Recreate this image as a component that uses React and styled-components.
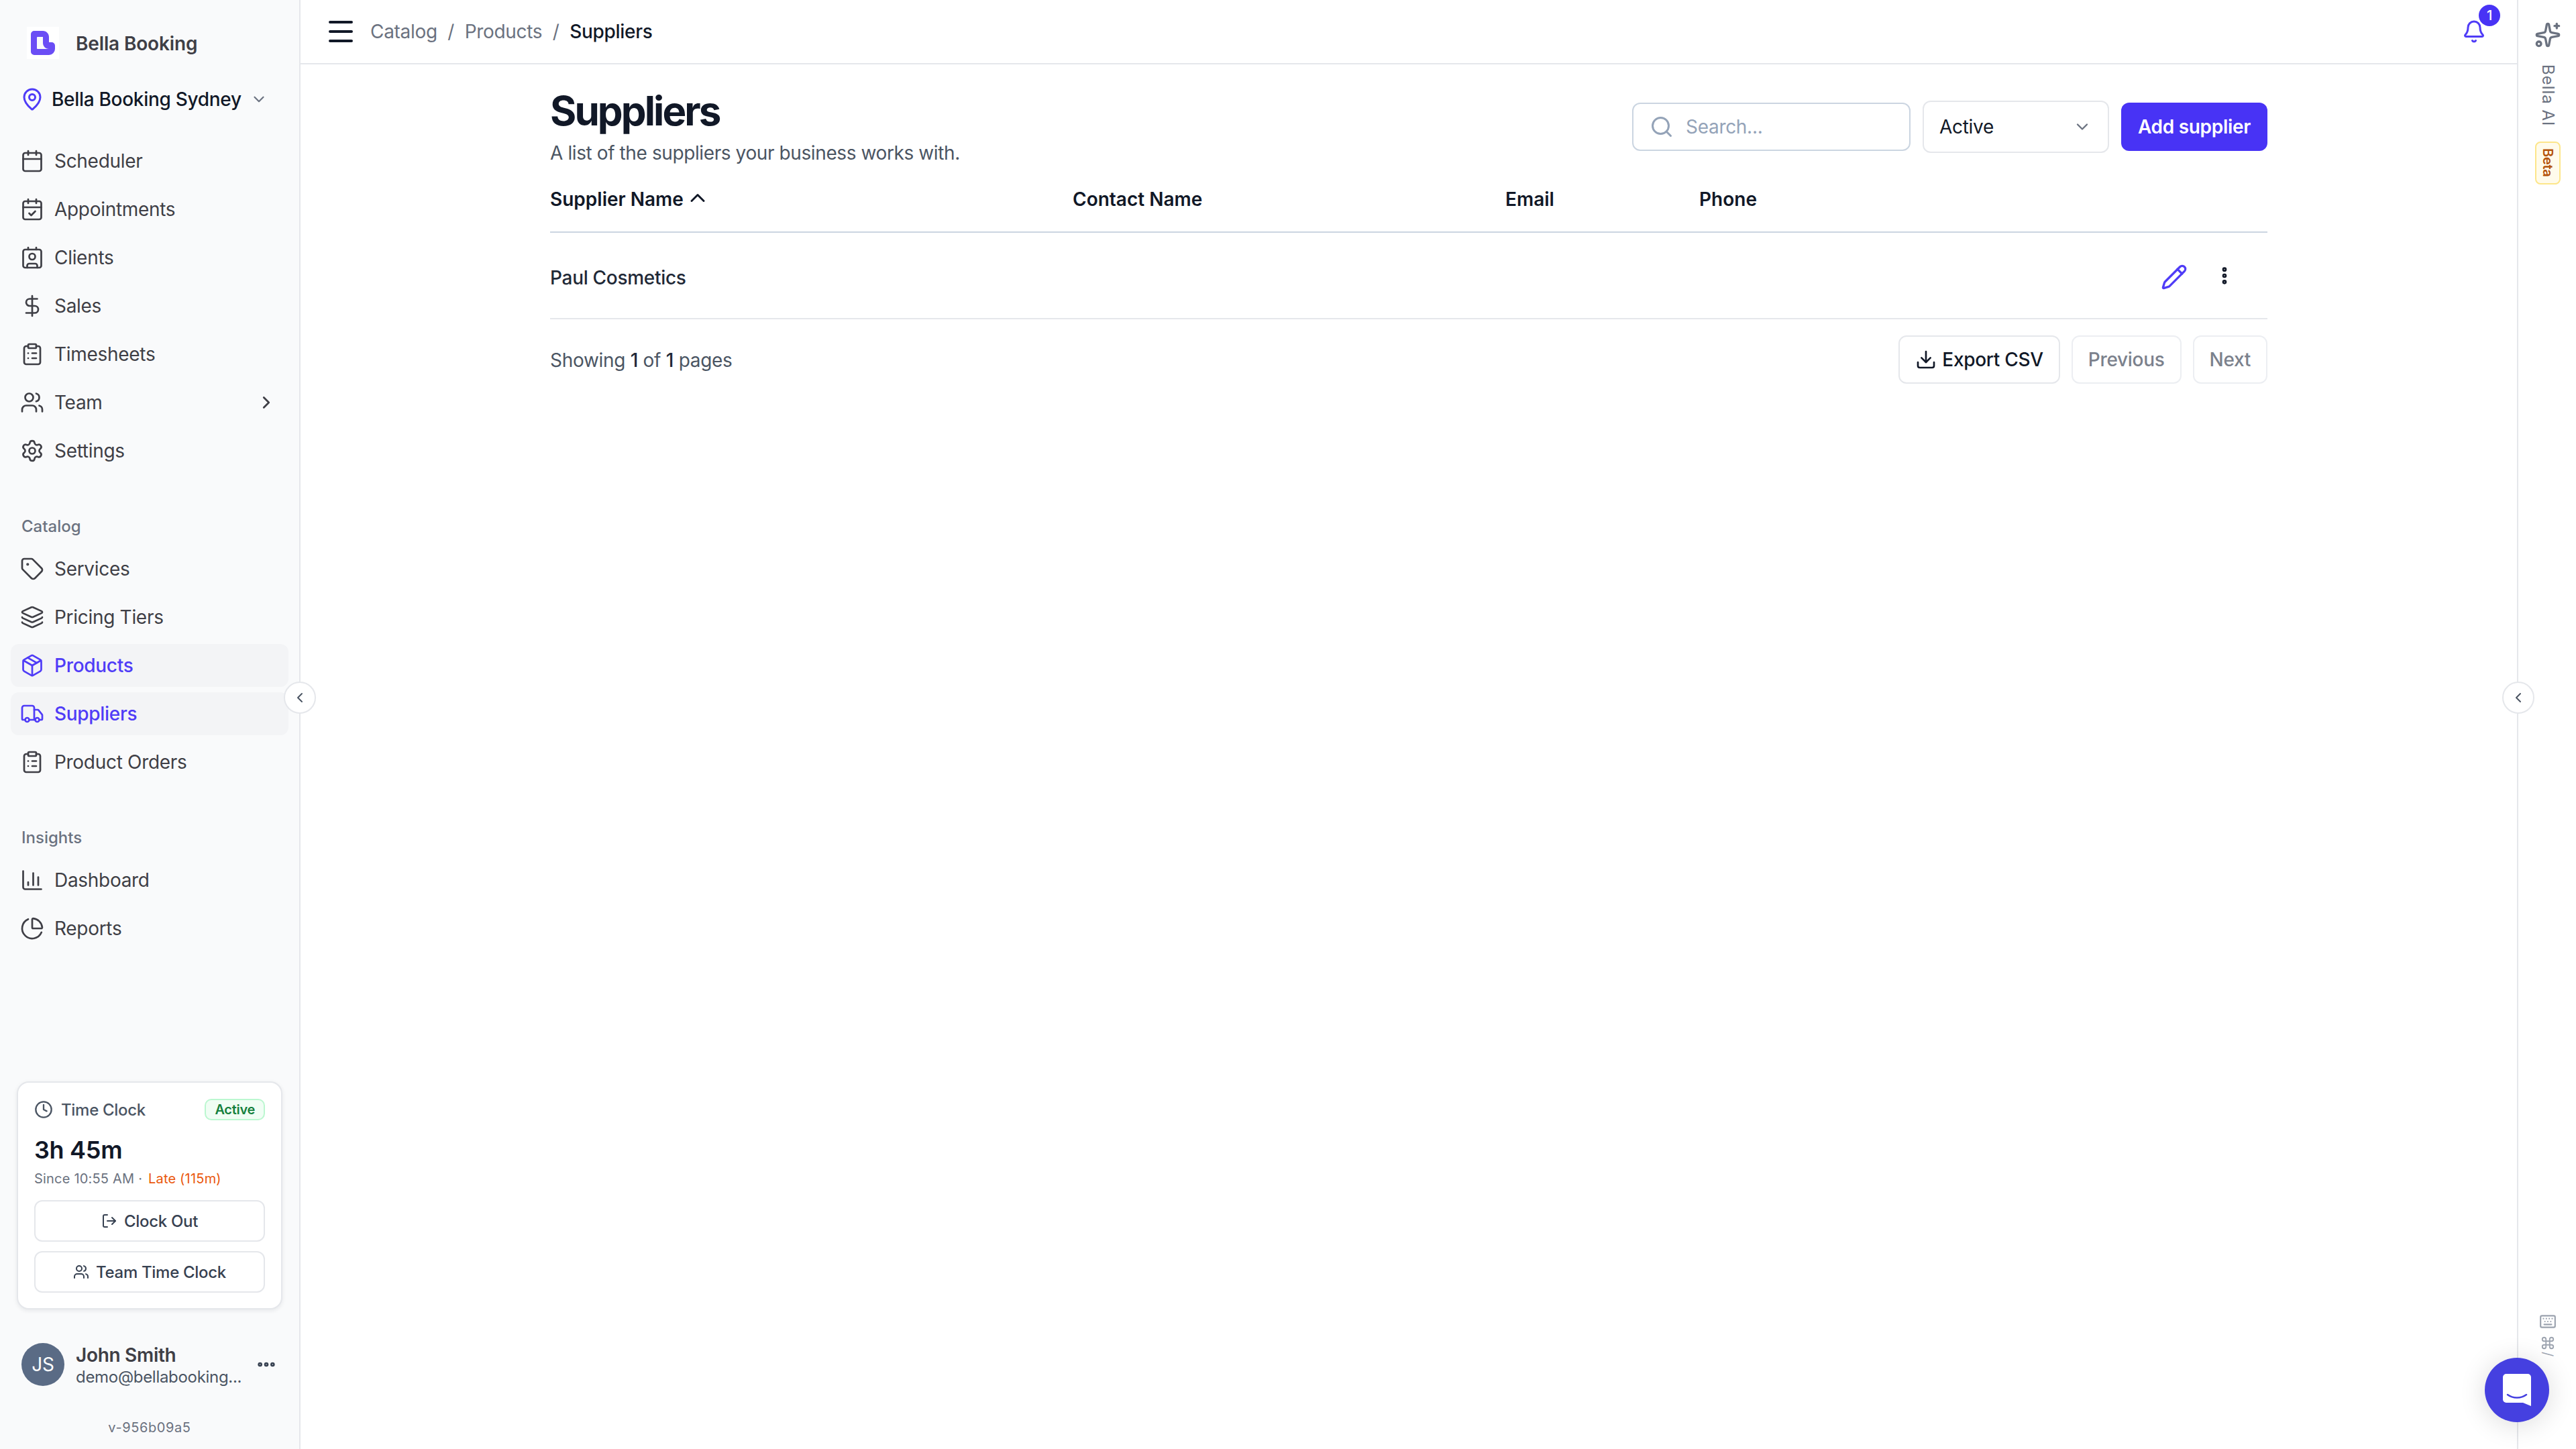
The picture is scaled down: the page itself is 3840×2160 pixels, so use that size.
import React from 'react';
import styled, { createGlobalStyle } from 'styled-components';
import {
  Bell, Calendar, CalendarCheck, ChartColumn, ChartPie, ChevronDown, ChevronLeft, ChevronRight, ChevronUp,
  ClipboardList, Clock, Command, Contact, DollarSign, Download, Ellipsis, EllipsisVertical, Keyboard, Layers,
  LogOut, MapPin, Package, Pencil, Search, Settings, Sparkles, Tag, Truck, Users,
} from 'lucide-react';

const GlobalStyle = createGlobalStyle`
  html, body { margin: 0; padding: 0; background: #fff; }
  body { font-family: Inter, "Noto Sans", sans-serif; color: #111827; letter-spacing: -0.3px; }
  * { box-sizing: border-box; }
`;

const Page = styled.div`
  position: relative;
  display: flex;
  width: 3840px;
  height: 2160px;
  overflow: hidden;
  background: #fff;
`;

/* sidebar */
const Sidebar = styled.aside`
  width: 448px;
  flex: none;
  display: flex;
  flex-direction: column;
  background: #f9fafb;
  border-right: 2px solid #e5e7eb;
  padding-bottom: 18px;
`;

const Brand = styled.div`
  display: flex;
  align-items: center;
  gap: 25px;
  margin: 40px 0 0 40px;
  height: 48px;
  font-size: 28px;
  font-weight: 600;
  letter-spacing: -0.15px;
  color: #3f3f46;
  span { position: relative; top: 1px; }
`;

const LogoBox = styled.div`
  width: 48px;
  height: 48px;
  background: #fff;
  display: flex;
  align-items: center;
  justify-content: center;
`;

const Location = styled.div`
  display: flex;
  align-items: center;
  height: 48px;
  margin: 36px 0 36px 30px;
  font-size: 28px;
  font-weight: 500;
  color: #111827;
  svg:first-child { color: #4f3cf7; margin-right: 11px; }
  svg:last-child { color: #6b7280; margin-left: 13px; }
`;

const NavList = styled.nav`
  display: flex;
  flex-direction: column;
  gap: 8px;
  padding: 0 16px;
`;

const NavItem = styled.div`
  display: flex;
  align-items: center;
  gap: 15px;
  height: 64px;
  padding: 0 14px;
  border-radius: 12px;
  font-size: 28px;
  color: ${(p) => (p.$active ? '#4f3cf7' : '#3f3f46')};
  font-weight: ${(p) => (p.$active ? 500 : 400)};
  background: ${(p) => (p.$active ? '#f3f4f6' : 'transparent')};
  svg { flex: none; }
  svg:nth-child(3) { margin-left: auto; margin-right: 4px; }
`;

const SectionLabel = styled.div`
  margin: 64px 0 16px 32px;
  height: 32px;
  line-height: 34px;
  font-size: 24px;
  font-weight: 500;
  color: #6b7280;
  letter-spacing: 0;
`;

const ClockCard = styled.div`
  margin: auto 0 0 25px;
  width: 396px;
  padding: 24px 24px 23px;
  background: #fff;
  border: 2px solid #e5e7eb;
  border-radius: 18px;
  box-shadow: 0 2px 6px rgba(17, 24, 39, 0.08);
`;

const ClockHead = styled.div`
  display: flex;
  align-items: center;
  height: 32px;
  font-size: 24px;
  font-weight: 500;
  color: #4b5563;
  svg { margin-right: 12px; }
`;

const ActiveBadge = styled.span`
  margin-left: auto;
  height: 32px;
  padding: 0 13px;
  line-height: 28px;
  border: 2px solid #bbf7d0;
  border-radius: 10px;
  background: #f0fdf4;
  color: #15803d;
  font-size: 20px;
  font-weight: 600;
`;

const Elapsed = styled.div`
  margin-top: 22px;
  line-height: 44px;
  font-size: 36px;
  font-weight: 600;
  color: #111827;
`;

const Since = styled.div`
  margin: 7px 0 18px;
  line-height: 28px;
  font-size: 20px;
  letter-spacing: 0.2px;
  color: #6b7280;
  span { color: #ea580c; margin-left: 3px; }
`;

const ClockButton = styled.div`
  display: flex;
  align-items: center;
  justify-content: center;
  gap: 10px;
  height: 62px;
  margin-top: ${(p) => (p.$second ? '14px' : 0)};
  border: 2px solid #e5e7eb;
  border-radius: 12px;
  font-size: 24px;
  font-weight: 500;
  color: #374151;
`;

const UserRow = styled.div`
  display: flex;
  align-items: center;
  height: 64px;
  margin: 50px 0 0 32px;
`;

const Avatar = styled.div`
  width: 64px;
  height: 64px;
  border-radius: 50%;
  background: #5a6b85;
  color: #fff;
  display: flex;
  align-items: center;
  justify-content: center;
  font-size: 28px;
  margin-right: 17px;
`;

const UserText = styled.div`
  width: 268px;
  display: flex;
  flex-direction: column;
  padding-top: 3px;
`;

const UserName = styled.div`
  font-size: 28px;
  line-height: 34px;
  font-weight: 600;
  color: #3f3f46;
`;

const UserMail = styled.div`
  font-size: 24px;
  line-height: 32px;
  color: #4b5563;
  white-space: nowrap;
`;

const Version = styled.div`
  margin-top: 48px;
  line-height: 28px;
  text-align: center;
  font-size: 20px;
  letter-spacing: 0.6px;
  color: #6b7280;
`;

/* main */
const Main = styled.main`
  flex: 1;
  min-width: 0;
  display: flex;
  flex-direction: column;
`;

const TopBar = styled.header`
  height: 96px;
  flex: none;
  display: flex;
  align-items: center;
  padding: 0 32px 0 42px;
  border-bottom: 2px solid #e5e7eb;
`;

const Crumbs = styled.div`
  display: flex;
  align-items: center;
  gap: 15.5px;
  margin-left: 26px;
  font-size: 28px;
  color: #6b7280;
  b { font-weight: 500; color: #111827; }
`;

const BellWrap = styled.div`
  position: relative;
  margin-left: auto;
  width: 32px;
  height: 36px;
  color: #4f3cf7;
  margin-right: 18px;
`;

const BellCount = styled.span`
  position: absolute;
  top: -22px;
  left: 25px;
  width: 32px;
  height: 32px;
  border-radius: 50%;
  background: #4833f5;
  color: #fff;
  font-size: 20px;
  font-weight: 500;
  display: flex;
  align-items: center;
  justify-content: center;
`;

const Content = styled.div`
  width: 2560px;
  margin: 0 auto;
`;

const PageHead = styled.div`
  display: flex;
  align-items: center;
  justify-content: space-between;
  padding-top: 33px;
`;

const Title = styled.h1`
  margin: 0;
  font-size: 60px;
  line-height: 72px;
  font-weight: 700;
  letter-spacing: -2.9px;
  color: #111827;
`;

const Subtitle = styled.p`
  margin: 7px 0 0;
  font-size: 28px;
  line-height: 40px;
  letter-spacing: -0.4px;
  color: #4b5563;
`;

const Controls = styled.div`
  display: flex;
  align-items: center;
  gap: 18px;
`;

const SearchBox = styled.div`
  width: 415px;
  height: 72px;
  display: flex;
  align-items: center;
  gap: 18px;
  padding: 0 24px;
  border: 2px solid #cbd5e1;
  border-radius: 12px;
  font-size: 28px;
  color: #94a3b8;
`;

const SelectBox = styled.div`
  width: 278px;
  height: 78px;
  display: flex;
  align-items: center;
  justify-content: space-between;
  padding: 0 24px 0 23px;
  border: 2px solid #e5e7eb;
  border-radius: 12px;
  font-size: 28px;
  color: #111827;
  svg { color: #6b7280; }
`;

const PrimaryButton = styled.div`
  width: 218px;
  height: 72px;
  display: flex;
  align-items: center;
  justify-content: center;
  border-radius: 12px;
  background: #4833f5;
  color: #fff;
  font-size: 28px;
  font-weight: 600;
`;

const HeadRow = styled.div`
  display: grid;
  grid-template-columns: 779px 645px 289px 1fr;
  align-items: center;
  height: 99px;
  border-bottom: 2px solid #cbd5e1;
  font-size: 28px;
  font-weight: 600;
  letter-spacing: 0;
  color: #111827;
`;

const SortCell = styled.div`
  display: flex;
  align-items: center;
  height: 36px;
  gap: 3px;
  svg { margin-top: -4px; }
`;

const BodyRow = styled.div`
  display: flex;
  align-items: center;
  justify-content: space-between;
  height: 129px;
  border-bottom: 2px solid #e5e7eb;
  font-size: 28px;
  font-weight: 500;
  color: #1f2937;
`;

const RowName = styled.div`
  padding-top: 6px;
`;

const RowActions = styled.div`
  display: flex;
  align-items: center;
  gap: 39px;
  padding-right: 48px;
  color: #111827;
  svg:first-child { color: #4f3cf7; margin-top: 4px; }
`;

const TableFoot = styled.div`
  display: flex;
  align-items: center;
  justify-content: space-between;
  padding-top: 24px;
  font-size: 28px;
  color: #4b5563;
  b { font-weight: 500; color: #1f2937; }
`;

const FootText = styled.div`
  padding-top: 2px;
`;

const Pager = styled.div`
  display: flex;
  gap: 17px;
`;

const PagerButton = styled.div`
  height: 72px;
  padding: 0 23px;
  display: flex;
  align-items: center;
  gap: 8px;
  border: 2px solid ${(p) => (p.$disabled ? '#eceef2' : '#e5e7eb')};
  border-radius: 12px;
  font-size: 28px;
  font-weight: 500;
  color: ${(p) => (p.$disabled ? '#7b818c' : '#111827')};
`;

/* right rail */
const Rail = styled.aside`
  width: 88px;
  flex: none;
  display: flex;
  flex-direction: column;
  align-items: center;
  border-left: 2px solid #e5e7eb;
  padding: 32px 0 0 2px;
  color: #6b7280;
`;

const RailLabel = styled.div`
  writing-mode: vertical-rl;
  margin-top: 24px;
  font-size: 24px;
  line-height: 28px;
  letter-spacing: 1px;
`;

const BetaBadge = styled.div`
  writing-mode: vertical-rl;
  margin-top: 22px;
  width: 38px;
  height: 64px;
  display: flex;
  align-items: center;
  justify-content: center;
  background: #fffbeb;
  border: 2px solid #fde68a;
  border-radius: 8px;
  color: #b45309;
  font-size: 20px;
  font-weight: 600;
`;

const RailKeys = styled.div`
  margin-top: auto;
  margin-bottom: 138px;
  display: flex;
  flex-direction: column;
  align-items: center;
  gap: 2px;
  color: #9ca3af;
  svg:first-child { margin-bottom: 6px; }
  span { writing-mode: vertical-rl; font-size: 20px; line-height: 20px; }
`;

const EdgeHandle = styled.div`
  position: absolute;
  top: 1016px;
  left: ${(p) => p.$left}px;
  width: 48px;
  height: 48px;
  border-radius: 50%;
  background: #fff;
  border: 2px solid #e5e7eb;
  color: #4b5563;
  display: flex;
  align-items: center;
  justify-content: center;
`;

const ChatButton = styled.div`
  position: absolute;
  left: 3704px;
  top: 2024px;
  width: 96px;
  height: 96px;
  border-radius: 50%;
  background: #4540e0;
  display: flex;
  align-items: center;
  justify-content: center;
  box-shadow: 0 4px 40px rgba(0, 0, 0, 0.14);
`;

const BellaLogo = () => (
  <svg width="36" height="36" viewBox="0 0 36 36">
    <path fill="#6a4df5" d="M5 0H18C23 0 27 4 27 9V17H31a5 5 0 0 1 5 5v5a9 9 0 0 1-9 9H5a5 5 0 0 1-5-5V5a5 5 0 0 1 5-5z" />
    <path fill="#f9fafb" d="M10 9H18V18C18 23 22 27 27 27H10a1 1 0 0 1-1-1V10a1 1 0 0 1 1-1z" />
  </svg>
);

const MenuBars = () => (
  <svg width="36" height="32" viewBox="0 0 36 32" fill="none" stroke="#111827" strokeWidth="4" strokeLinecap="round">
    <path d="M2 2h32M2 16h32M2 30h32" />
  </svg>
);

const ChatGlyph = () => (
  <svg width="42" height="48" viewBox="0 0 42 48">
    <path fill="#fff" d="M5 0h32a5 5 0 0 1 5 5v43l-12-5H5a5 5 0 0 1-5-5V5a5 5 0 0 1 5-5z" />
    <path fill="none" stroke="#4540e0" strokeWidth="2.6" strokeLinecap="round" d="M7 31c8 6 20 6 28 0" />
  </svg>
);

const mainNav = [
  { label: 'Scheduler', icon: Calendar },
  { label: 'Appointments', icon: CalendarCheck },
  { label: 'Clients', icon: Contact },
  { label: 'Sales', icon: DollarSign },
  { label: 'Timesheets', icon: ClipboardList },
  { label: 'Team', icon: Users, more: true },
  { label: 'Settings', icon: Settings },
];

const catalogNav = [
  { label: 'Services', icon: Tag },
  { label: 'Pricing Tiers', icon: Layers },
  { label: 'Products', icon: Package, active: true },
  { label: 'Suppliers', icon: Truck, active: true },
  { label: 'Product Orders', icon: ClipboardList },
];

const insightsNav = [
  { label: 'Dashboard', icon: ChartColumn },
  { label: 'Reports', icon: ChartPie },
];

const NavGroup = ({ items }) => (
  <NavList>
    {items.map(({ label, icon: Icon, active, more }) => (
      <NavItem key={label} $active={active}>
        <Icon size={36} strokeWidth={1.8} />
        <span>{label}</span>
        {more && <ChevronRight size={30} strokeWidth={2.2} />}
      </NavItem>
    ))}
  </NavList>
);

export default function App() {
  return (
    <Page>
      <GlobalStyle />
      <Sidebar>
        <Brand>
          <LogoBox><BellaLogo /></LogoBox>
          <span>Bella Booking</span>
        </Brand>
        <Location>
          <MapPin size={36} strokeWidth={2} />
          Bella Booking Sydney
          <ChevronDown size={26} strokeWidth={2} />
        </Location>
        <NavGroup items={mainNav} />
        <SectionLabel>Catalog</SectionLabel>
        <NavGroup items={catalogNav} />
        <SectionLabel>Insights</SectionLabel>
        <NavGroup items={insightsNav} />
        <ClockCard>
          <ClockHead>
            <Clock size={28} strokeWidth={2} />
            Time Clock
            <ActiveBadge>Active</ActiveBadge>
          </ClockHead>
          <Elapsed>3h 45m</Elapsed>
          <Since>Since 10:55 AM · <span>Late (115m)</span></Since>
          <ClockButton><LogOut size={24} strokeWidth={2} />Clock Out</ClockButton>
          <ClockButton $second><Users size={24} strokeWidth={2} />Team Time Clock</ClockButton>
        </ClockCard>
        <UserRow>
          <Avatar>JS</Avatar>
          <UserText>
            <UserName>John Smith</UserName>
            <UserMail>demo@bellabooking...</UserMail>
          </UserText>
          <Ellipsis size={32} strokeWidth={3} color="#374151" />
        </UserRow>
        <Version>v-956b09a5</Version>
      </Sidebar>

      <Main>
        <TopBar>
          <MenuBars />
          <Crumbs>
            <span>Catalog</span>
            <span>/</span>
            <span>Products</span>
            <span>/</span>
            <b>Suppliers</b>
          </Crumbs>
          <BellWrap>
            <Bell size={36} strokeWidth={2} />
            <BellCount>1</BellCount>
          </BellWrap>
        </TopBar>
        <Content>
          <PageHead>
            <div>
              <Title>Suppliers</Title>
              <Subtitle>A list of the suppliers your business works with.</Subtitle>
            </div>
            <Controls>
              <SearchBox><Search size={36} strokeWidth={2} />Search...</SearchBox>
              <SelectBox>Active<ChevronDown size={28} strokeWidth={2} /></SelectBox>
              <PrimaryButton>Add supplier</PrimaryButton>
            </Controls>
          </PageHead>
          <HeadRow>
            <SortCell>Supplier Name<ChevronUp size={36} strokeWidth={2} /></SortCell>
            <div>Contact Name</div>
            <div>Email</div>
            <div>Phone</div>
          </HeadRow>
          <BodyRow>
            <RowName>Paul Cosmetics</RowName>
            <RowActions>
              <Pencil size={40} strokeWidth={2} />
              <EllipsisVertical size={32} strokeWidth={3} />
            </RowActions>
          </BodyRow>
          <TableFoot>
            <FootText>Showing <b>1</b> of <b>1</b> pages</FootText>
            <Pager>
              <PagerButton><Download size={32} strokeWidth={2} />Export CSV</PagerButton>
              <PagerButton $disabled>Previous</PagerButton>
              <PagerButton $disabled>Next</PagerButton>
            </Pager>
          </TableFoot>
        </Content>
      </Main>

      <Rail>
        <Sparkles size={40} strokeWidth={2} />
        <RailLabel>Bella AI</RailLabel>
        <BetaBadge>Beta</BetaBadge>
        <RailKeys>
          <Keyboard size={26} strokeWidth={2} />
          <Command size={22} strokeWidth={2} />
          <span>/</span>
        </RailKeys>
      </Rail>

      <EdgeHandle $left={423}><ChevronLeft size={24} strokeWidth={2} /></EdgeHandle>
      <EdgeHandle $left={3730}><ChevronLeft size={24} strokeWidth={2} /></EdgeHandle>
      <ChatButton><ChatGlyph /></ChatButton>
    </Page>
  );
}
